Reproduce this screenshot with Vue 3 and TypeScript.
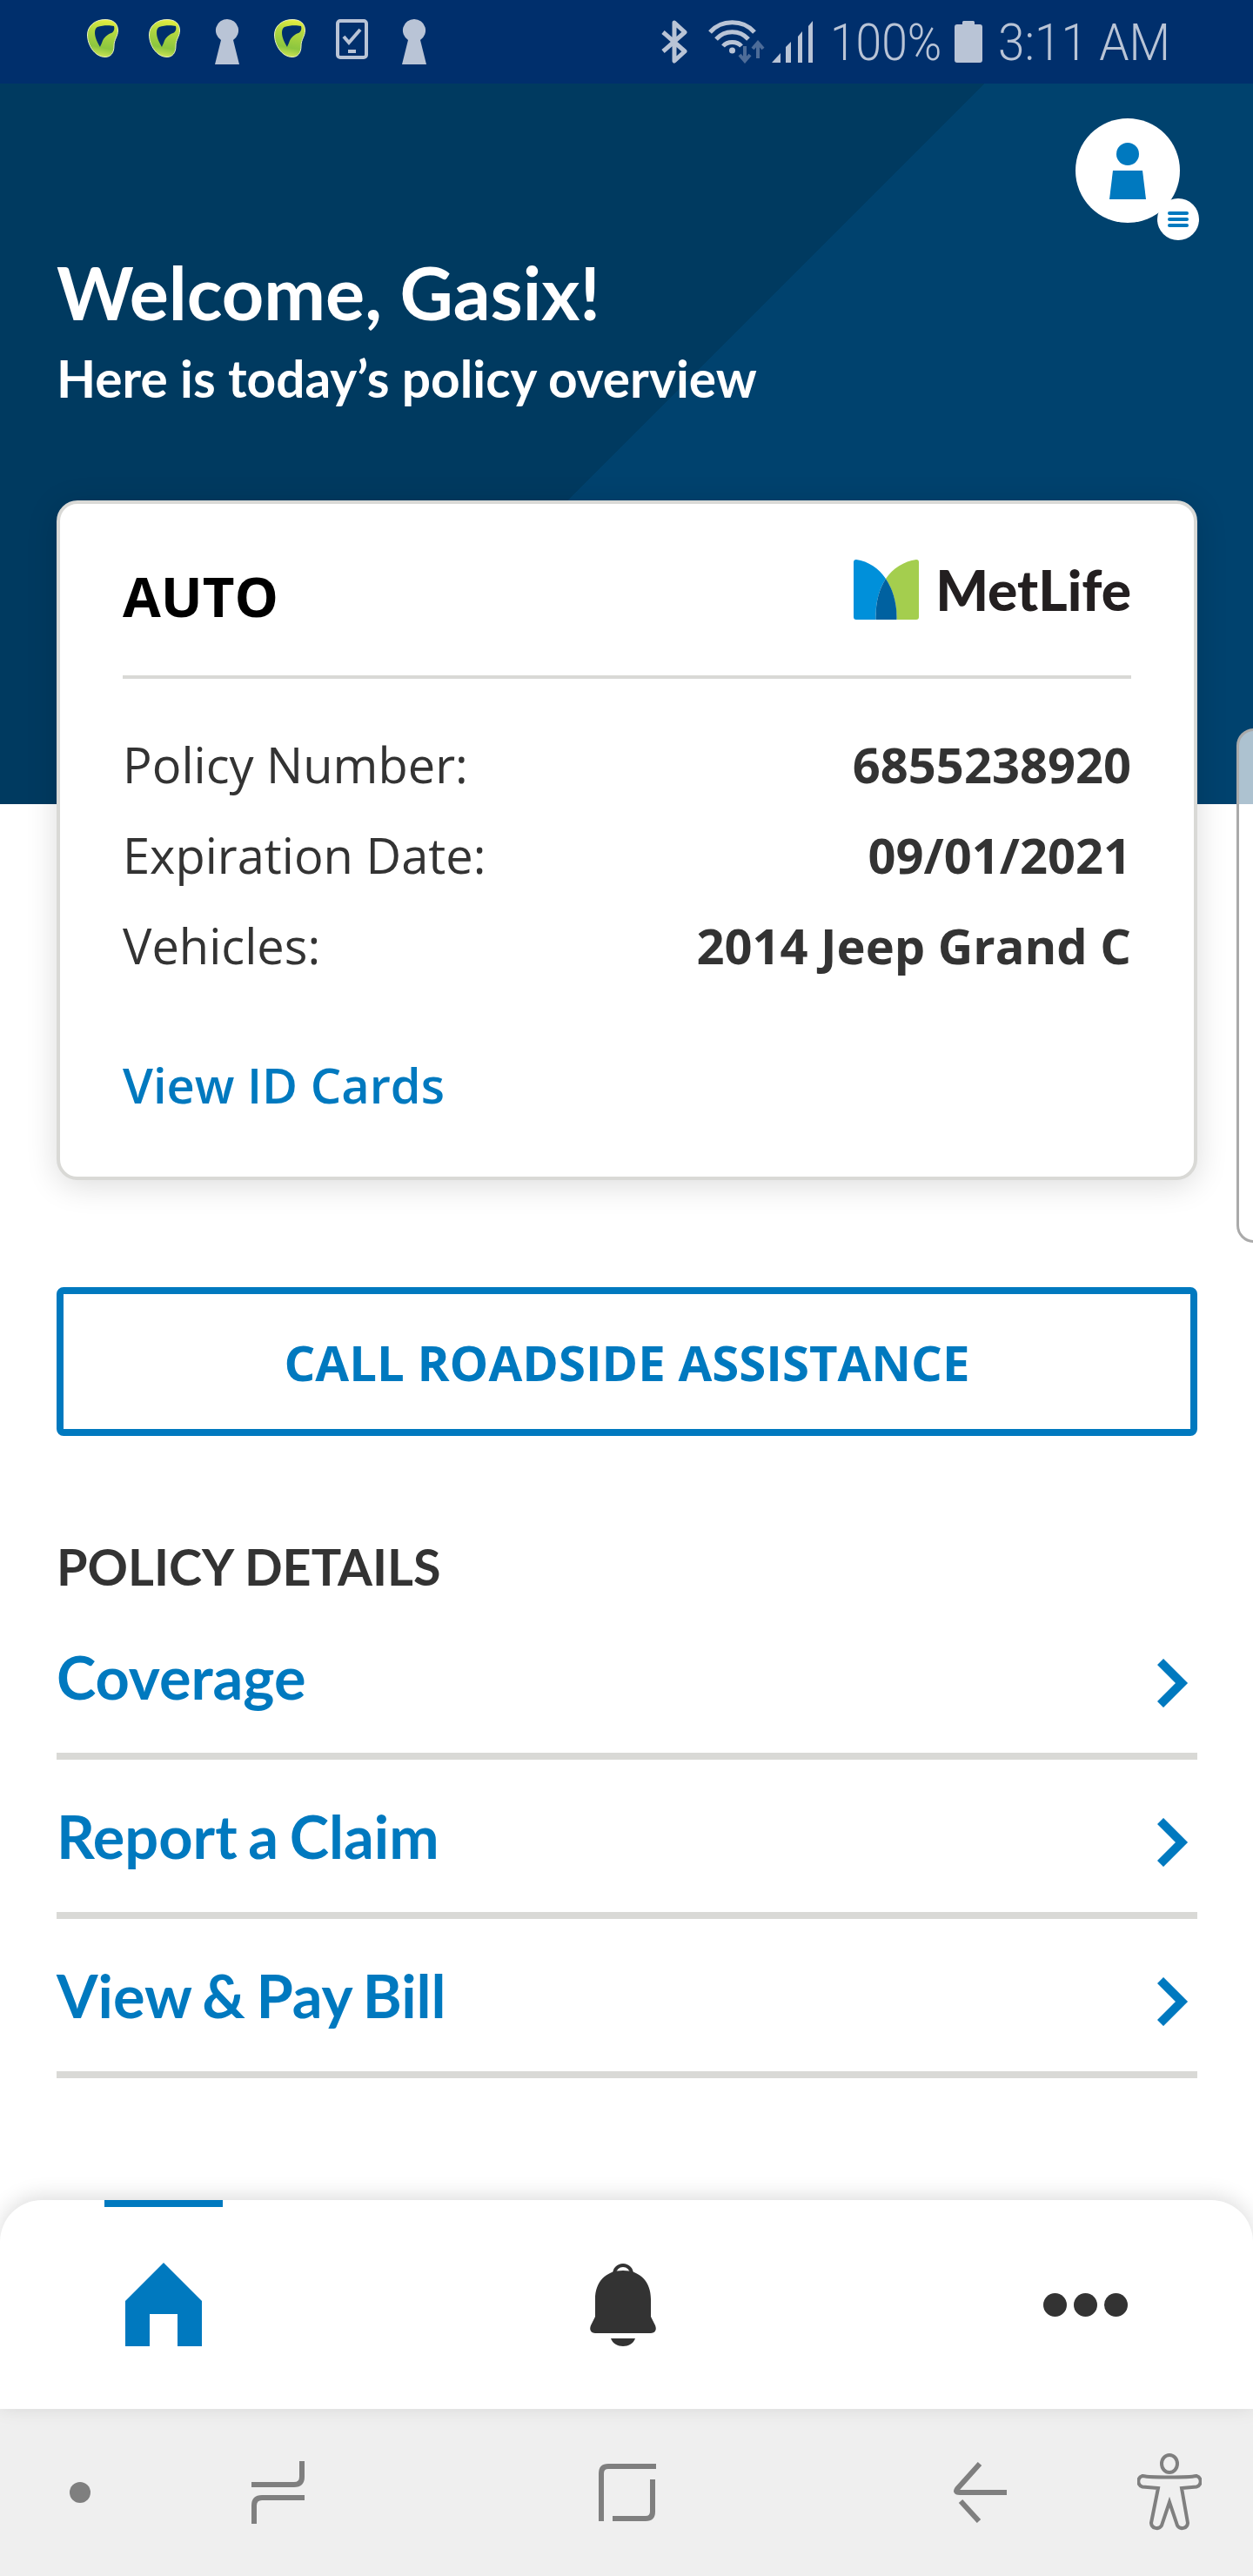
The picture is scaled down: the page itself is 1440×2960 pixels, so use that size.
<script setup lang="ts">
const policyRows = [
  { label: 'Policy Number:', value: '6855238920' },
  { label: 'Expiration Date:', value: '09/01/2021' },
  { label: 'Vehicles:', value: '2014 Jeep Grand C' },
]

const detailLinks = ['Coverage', 'Report a Claim', 'View & Pay Bill']

// left side of the status bar, one slot per notification icon
const notifications = ['leaf', 'leaf', 'key', 'leaf', 'phone', 'key']
</script>

<template>
  <div class="page">
    <div class="status-bar">
      <div class="notif-icons">
        <div v-for="(icon, i) in notifications" :key="i" class="notif-slot">
          <svg v-if="icon === 'leaf'" width="36" height="44" viewBox="0 0 36 44">
            <defs>
              <linearGradient :id="`leaf-${i}`" x1="0.6" y1="0" x2="0.45" y2="1">
                <stop offset="0" stop-color="#e6ee40" />
                <stop offset="0.3" stop-color="#b4d840" />
                <stop offset="0.75" stop-color="#8cc63f" />
                <stop offset="1" stop-color="#d0e455" />
              </linearGradient>
            </defs>
            <path
              d="M21 .5C30 .5 35.500 5 35.500 13C35.500 20 31 23 31 31C31 39 27 43.500 21 43.500C9 43.500 .5 30 .5 18C.5 8 9 .5 21 .5Z"
              :fill="`url(#leaf-${i})`"
              stroke="#e9f2c4"
              stroke-width="1"
            />
            <path
              d="M12 9C18 7 26 7 31 8C32 11 31 14 29 15.500C24 17 19 21 17.500 26C16.500 29 15.500 30 15 32C12 27 9 21 9 15.500C9 12.500 10 10 12 9Z"
              fill="#002f6c"
            />
          </svg>
          <svg v-else-if="icon === 'key'" width="28" height="52" viewBox="0 0 28 52">
            <path d="M14 0A13 13 0 0 1 21 24L28 52H0L7 24A13 13 0 0 1 14 0Z" fill="#b9c4d6" />
          </svg>
          <svg v-else width="37" height="46" viewBox="0 0 37 46" fill="none" stroke="#b9c4d6">
            <rect x="2" y="2" width="33" height="42" rx="3" stroke-width="4" />
            <path d="M9 20L15 27L28 12" stroke-width="4" />
            <path d="M14 37H23" stroke-width="4" />
          </svg>
        </div>
      </div>
      <div class="sys-icons">
        <svg class="bt" width="32" height="50" viewBox="0 0 32 50" fill="none" stroke="#b9c4d6" stroke-width="5">
          <path d="M3 14L28 36L16 47V3L28 14L3 36" stroke-linejoin="round" />
        </svg>
        <svg class="wifi" width="76" height="50" viewBox="0 0 76 50" fill="none" stroke="#b9c4d6" stroke-width="5">
          <path d="M2 14C15 -1 40 -1 53 14" />
          <path d="M9 22C19 11 36 11 46 22" />
          <path d="M17 30C22 24 33 24 38 30" />
          <circle cx="27.5" cy="35" r="3.5" fill="#b9c4d6" stroke="none" />
          <path d="M42 30V46M36 40L42 47L48 40" stroke="#4d6c98" stroke-width="4" />
          <path d="M57 44V27M51 33L57 26L63 33" stroke="#4d6c98" stroke-width="4" />
        </svg>
        <svg class="signal" width="47" height="48" viewBox="0 0 47 48" fill="#b9c4d6">
          <path d="M0 48L10 37V48Z" />
          <path d="M16 48V30L22 24V48Z" />
          <path d="M30 48V18L35 12V48Z" />
          <path d="M42 48V6L47 0V48Z" />
        </svg>
        <span class="status-text pct">100%</span>
        <svg class="battery" width="32" height="48" viewBox="0 0 32 48" fill="#b9c4d6">
          <path d="M9 1.5Q9 0 10.5 0H21.5Q23 0 23 1.5V4H29Q32 4 32 7V45Q32 48 29 48H3Q0 48 0 45V7Q0 4 3 4H9Z" />
        </svg>
        <span class="status-text time">3:11 AM</span>
      </div>
    </div>

    <header class="hero">
      <div class="hero-copy">
        <h1>Welcome, Gasix!</h1>
        <p>Here is today’s policy overview</p>
      </div>
      <div class="avatar">
        <svg width="44" height="66" viewBox="0 0 44 66" fill="#0079bf">
          <circle cx="22" cy="14" r="13" />
          <path d="M5 33H39L43 66H1Z" />
        </svg>
        <span class="avatar-badge">
          <i></i><i></i><i></i>
        </span>
      </div>
    </header>

    <main class="content">
      <div class="peek-card"></div>

      <section class="policy-card">
        <div class="card-head">
          <h2>AUTO</h2>
          <div class="brand">
            <svg width="75" height="69" viewBox="0 0 75 69">
              <path d="M3 0C17 2 29 10 37 22C29 34 25 50 25.500 69H3Q0 69 0 66V3Q0 0 3 0Z" fill="#0090da" />
              <path d="M72 0C58 2 45 10 37 22C45 34 50 50 49.500 69H72Q75 69 75 66V3Q75 0 72 0Z" fill="#a4ce4e" />
              <path d="M37 22C29 34 25 50 25.500 69H49.500C50 50 45 34 37 22Z" fill="#0061a0" />
            </svg>
            <span class="brand-name">MetLife</span>
          </div>
        </div>
        <div class="policy-rows">
          <div v-for="row in policyRows" :key="row.label" class="policy-row">
            <span>{{ row.label }}</span>
            <strong>{{ row.value }}</strong>
          </div>
        </div>
        <a class="id-link">View ID Cards</a>
      </section>

      <button class="roadside">CALL ROADSIDE ASSISTANCE</button>

      <h3 class="details-title">POLICY DETAILS</h3>
      <ul class="details">
        <li v-for="link in detailLinks" :key="link">
          <span>{{ link }}</span>
          <svg width="36" height="56" viewBox="0 0 36 56" fill="none" stroke="#0079bf" stroke-width="10">
            <path d="M3.500 3.500L28 28L3.500 52.500" />
          </svg>
        </li>
      </ul>
    </main>

    <nav class="tabs">
      <div class="tab tab-active">
        <svg width="88" height="96" viewBox="0 0 88 96" fill="#0079bf">
          <path d="M44 0L88 44V96H60V59H28V96H0V44Z" />
        </svg>
      </div>
      <div class="tab">
        <svg width="76" height="96" viewBox="0 0 76 96" fill="#333">
          <path d="M26 13A12 12 0 0 1 50 13L46 13A8 8 0 0 0 30 13Z" />
          <path d="M38 9C18 9 6 22 6 42V62L1 72C-1 77 1 81 6 81H70C75 81 77 77 75 72L70 62V42C70 22 58 9 38 9Z" />
          <path d="M24 87H52C50 93 44 96 38 96C32 96 26 93 24 87Z" />
        </svg>
      </div>
      <div class="tab">
        <span class="more"><i></i><i></i><i></i></span>
      </div>
    </nav>

    <div class="nav-bar">
      <span class="nav-dot"></span>
      <svg class="nav-recents" width="64" height="74" viewBox="0 0 64 74" fill="none" stroke="#7f7f7f" stroke-width="6">
        <path d="M1 28H50Q59 28 59 19V1" />
        <path d="M62 43H13Q4 43 4 52V73" />
      </svg>
      <svg class="nav-home" width="66" height="66" viewBox="0 0 66 66" fill="none" stroke="#7f7f7f" stroke-width="6">
        <path d="M3 66V11Q3 3 11 3H66" />
        <path d="M16 63H54Q62 63 62 55V18" />
      </svg>
      <svg class="nav-back" width="62" height="70" viewBox="0 0 62 70" fill="none" stroke="#7f7f7f" stroke-width="6">
        <path d="M31 2L5 31Q2 35 8 35H62" />
        <path d="M9 45L30 68" />
      </svg>
      <svg class="nav-a11y" width="74" height="90" viewBox="0 0 74 90" fill="none" stroke="#7f7f7f" stroke-width="4">
        <ellipse cx="37" cy="12" rx="9" ry="10" />
        <path d="M6 26C16 28 58 28 68 26A6.500 6.500 0 0 1 68 38.500L51 40L58 80A6.500 6.500 0 0 1 46 83L37 56L28 83A6.500 6.500 0 0 1 16 80L24 40L6 38.500A6.500 6.500 0 0 1 6 26Z" />
      </svg>
    </div>
  </div>
</template>

<style scoped>
.page {
  position: relative;
  width: 1440px;
  height: 2960px;
  overflow: hidden;
  background: #fff;
  font-family: "Open Sans", sans-serif;
  color: #333;
}

.status-bar {
  height: 96px;
  background: #002f6c;
  display: flex;
  align-items: center;
  justify-content: space-between;
}

.notif-icons {
  display: flex;
  padding-left: 82px;
}

.notif-slot {
  width: 71.600px;
  display: flex;
  justify-content: center;
}

.sys-icons {
  display: flex;
  align-items: center;
  padding-right: 100px;
}

.sys-icons svg {
  flex: none;
}

.wifi {
  margin-left: 23px;
}

.signal {
  margin-left: -3px;
}

.status-text {
  display: inline-block;
  white-space: nowrap;
  font-family: "Roboto", sans-serif;
  font-weight: 300;
  font-size: 60px;
  line-height: 60px;
  padding-top: 2px;
  color: #b9c4d6;
  transform: scaleX(0.89);
  transform-origin: left center;
}

.pct {
  width: 125px;
  margin-left: 20px;
}

.battery {
  margin-left: 18px;
}

.time {
  width: 193px;
  margin-left: 18px;
  transform: scaleX(0.915);
}

.hero {
  height: 828px;
  background: linear-gradient(135deg, #003a60 800px, #00426e 800px);
  display: flex;
  justify-content: space-between;
  align-items: flex-start;
  padding: 40px 84px 0 65px;
  box-sizing: border-box;
  color: #fff;
}

.hero-copy {
  padding-top: 152px;
}

.hero h1 {
  margin: 0;
  font-family: "Lato", sans-serif;
  font-weight: 700;
  font-size: 84.500px;
  line-height: 96px;
}

.hero p {
  margin: 16px 0 0;
  font-family: "Lato", sans-serif;
  font-weight: 700;
  font-size: 58.600px;
  line-height: 68px;
}

.avatar {
  position: relative;
  width: 120px;
  height: 120px;
  border-radius: 50%;
  background: #fff;
  display: flex;
  align-items: center;
  justify-content: center;
}

.avatar-badge {
  position: absolute;
  right: -22px;
  bottom: -20px;
  width: 48px;
  height: 48px;
  border-radius: 50%;
  background: #fff;
  display: flex;
  flex-direction: column;
  align-items: center;
  justify-content: center;
  gap: 3px;
}

.avatar-badge i {
  display: block;
  width: 24px;
  height: 4px;
  background: #0079bf;
  border-radius: 2px;
}

.content {
  position: relative;
  display: flow-root;
  height: 1604px;
  padding: 0 64px 0 65px;
}

.peek-card {
  position: absolute;
  left: 1421px;
  top: -87px;
  width: 60px;
  height: 591px;
  box-sizing: border-box;
  border: 3px solid #aaa;
  border-radius: 20px;
  background: rgba(255, 255, 255, 0.68);
}

.policy-card {
  position: relative;
  margin-top: -349px;
  height: 781px;
  box-sizing: border-box;
  background: #fff;
  border: 4px solid #d9d9d6;
  border-radius: 24px;
  padding: 0 72px;
  box-shadow: 0 6px 36px rgba(0, 0, 0, 0.14);
}

.card-head {
  height: 197px;
  display: flex;
  justify-content: space-between;
  align-items: flex-start;
  border-bottom: 4px solid #d9d9d6;
}

.card-head h2 {
  margin: 66px 0 0;
  font-size: 63.500px;
  line-height: 80px;
  font-weight: 700;
  color: #000;
}

.brand {
  display: flex;
  align-items: center;
  gap: 19px;
  padding-top: 64px;
}

.brand-name {
  font-family: "Lato", sans-serif;
  font-weight: 900;
  font-size: 64px;
  line-height: 69px;
  color: #231f20;
}

.policy-rows {
  padding-top: 46px;
}

.policy-row {
  height: 104px;
  display: flex;
  justify-content: space-between;
  align-items: center;
  font-size: 56px;
  color: #333;
}

.policy-row strong {
  font-weight: 700;
}

.id-link {
  display: block;
  margin-top: 73px;
  font-size: 56px;
  line-height: 70px;
  font-weight: 600;
  color: #0079bf;
}

.roadside {
  display: block;
  width: 100%;
  height: 171px;
  margin-top: 123px;
  border: 8px solid #0079bf;
  border-radius: 8px;
  background: #fff;
  font-family: "Open Sans", sans-serif;
  font-weight: 700;
  font-size: 56.300px;
  color: #0079bf;
}

.details-title {
  margin: 118px 0 0;
  font-family: "Lato", sans-serif;
  font-weight: 700;
  font-size: 57.500px;
  line-height: 64px;
  color: #333;
}

.details {
  list-style: none;
  margin: 7px 0 0;
  padding: 0;
}

.details li {
  height: 183px;
  box-sizing: border-box;
  border-bottom: 8px solid #d9d9d6;
  display: flex;
  justify-content: space-between;
  align-items: center;
  padding-right: 10px;
  font-family: "Lato", sans-serif;
  font-weight: 700;
  font-size: 68.500px;
  word-spacing: -4px;
  color: #0079bf;
}

.details li svg {
  margin-top: 14px;
}

.tabs {
  position: relative;
  height: 240px;
  background: #fff;
  border-radius: 48px 48px 0 0;
  box-shadow: 0 -4px 24px rgba(0, 0, 0, 0.14);
  display: flex;
  align-items: center;
  justify-content: space-between;
  padding: 0 144px;
}

.tab {
  display: flex;
  align-items: center;
  justify-content: center;
  height: 96px;
  width: 97px;
}

.tab-active {
  width: 88px;
}

.tab-active::before {
  content: "";
  position: absolute;
  top: 0;
  left: 120px;
  width: 136px;
  height: 8px;
  background: #0079bf;
}

.more {
  display: flex;
  gap: 8px;
}

.more i {
  display: block;
  width: 27px;
  height: 27px;
  border-radius: 50%;
  background: #333;
}

.nav-bar {
  height: 192px;
  background: #efefef;
  display: flex;
  align-items: center;
}

.nav-bar svg {
  flex: none;
}

.nav-dot {
  width: 24px;
  height: 24px;
  border-radius: 50%;
  background: #7f7f7f;
  margin-left: 80px;
}

.nav-recents {
  margin-left: 184px;
}

.nav-home {
  margin-left: 336px;
}

.nav-back {
  margin-left: 341px;
}

.nav-a11y {
  margin-left: 150px;
}
</style>

<style>
body {
  margin: 0;
}
</style>
